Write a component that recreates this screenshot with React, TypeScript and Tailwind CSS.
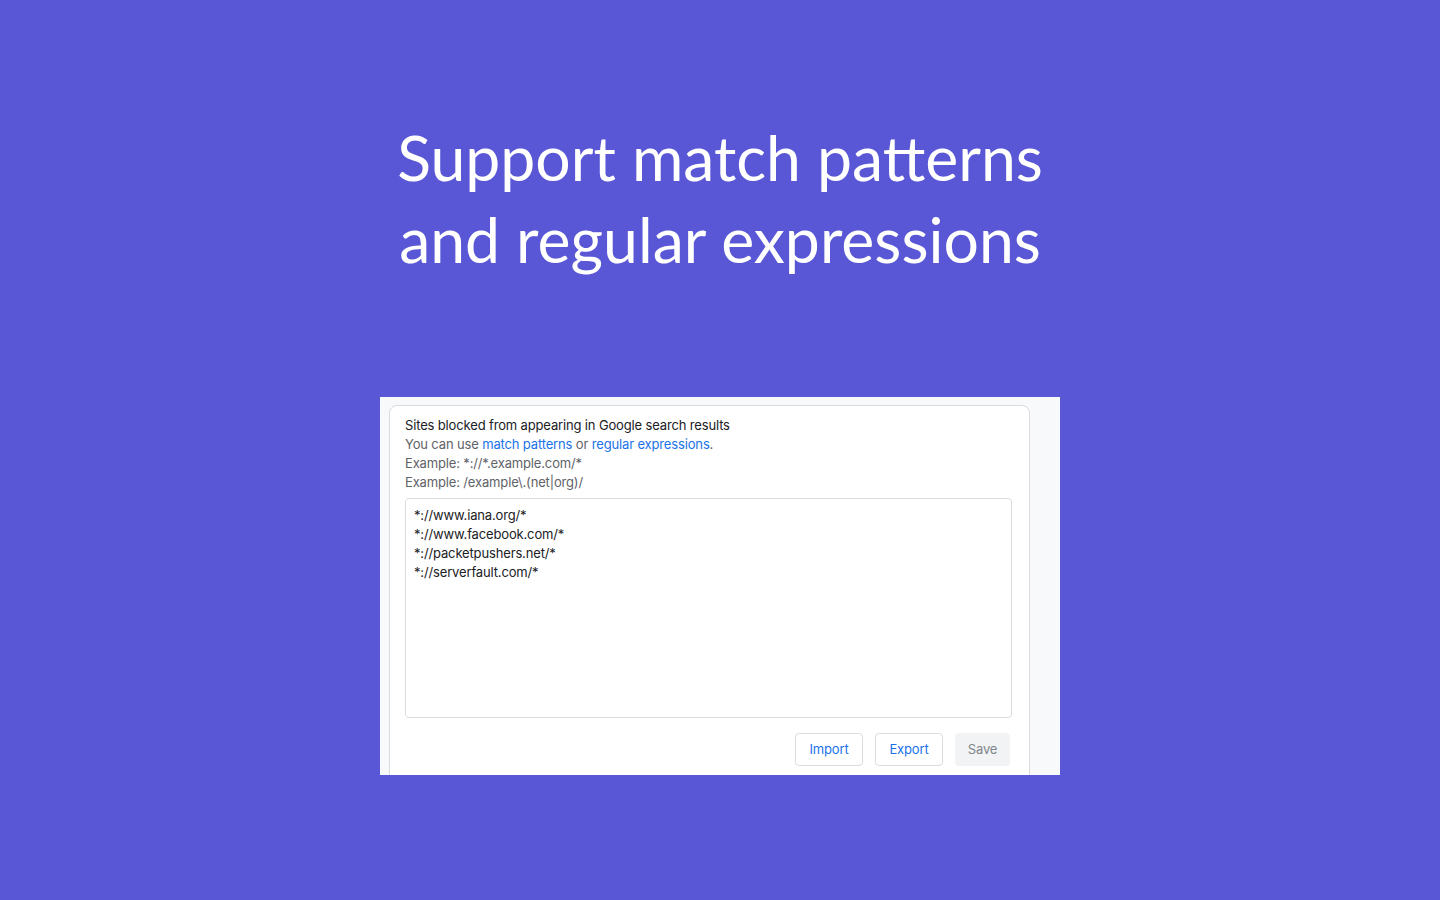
import React from "react";

const lines = [
  "*://www.iana.org/*",
  "*://www.facebook.com/*",
  "*://packetpushers.net/*",
  "*://serverfault.com/*",
];

export default function App() {
  return (
    <div className="flex h-[900px] w-full flex-col items-center bg-[#5957d5] font-['Lato',sans-serif]">
      <h1 className="mt-[116px] text-center text-[62.5px] leading-[82px] font-normal text-white">
        Support match patterns
        <br />
        and regular expressions
      </h1>

      <div className="mt-[117px] h-[378px] w-[680px] overflow-hidden bg-[#f8f9fa] pt-2 pl-[9px] font-['Inter',sans-serif]">
        <div className="w-[641px] rounded-lg border border-[#dadce0] bg-white px-[15px] pt-[10px] pb-4 text-[13px] leading-[19px] tracking-[-0.15px]">
          <div className="text-[#202124]">
            Sites blocked from appearing in Google search results
          </div>
          <div className="text-[#5f6368]">
            You can use <span className="text-[#1a73e8]">match patterns</span> or{" "}
            <span className="text-[#1a73e8]">regular expressions</span>.
          </div>
          <div className="text-[#5f6368]">Example: *://*.example.com/*</div>
          <div className="text-[#5f6368]">Example: /example\.(net|org)/</div>

          <div className="mt-[6px] h-[220px] w-[607px] rounded border border-[#dadce0] px-2 py-[7px] text-[#202124]">
            {lines.map((l) => (
              <div key={l}>{l}</div>
            ))}
          </div>

          <div className="mt-[15px] flex w-[607px] justify-end gap-3 pr-[2px]">
            <button className="h-[33px] w-[68px] rounded border border-[#dadce0] bg-white text-[#1a73e8]">
              Import
            </button>
            <button className="h-[33px] w-[68px] rounded border border-[#dadce0] bg-white text-[#1a73e8]">
              Export
            </button>
            <button className="h-[33px] w-[55px] rounded bg-[#f1f3f4] text-[#80868b]">
              Save
            </button>
          </div>
        </div>
      </div>
    </div>
  );
}
